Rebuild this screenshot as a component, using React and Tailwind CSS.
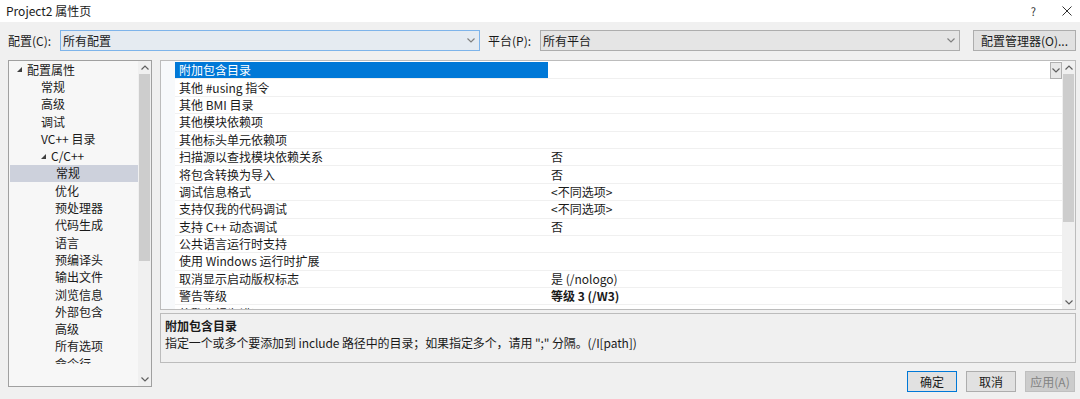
import React from "react";

const TREE = [
  { label: "配置属性", level: 0, arrow: true },
  { label: "常规", level: 1 },
  { label: "高级", level: 1 },
  { label: "调试", level: 1 },
  { label: "VC++ 目录", level: 1 },
  { label: "C/C++", level: 1, arrow: true },
  { label: "常规", level: 2, selected: true },
  { label: "优化", level: 2 },
  { label: "预处理器", level: 2 },
  { label: "代码生成", level: 2 },
  { label: "语言", level: 2 },
  { label: "预编译头", level: 2 },
  { label: "输出文件", level: 2 },
  { label: "浏览信息", level: 2 },
  { label: "外部包含", level: 2 },
  { label: "高级", level: 2 },
  { label: "所有选项", level: 2 },
  { label: "命令行", level: 2 },
];

const PROPS = [
  { name: "附加包含目录", value: "", selected: true },
  { name: "其他 #using 指令", value: "" },
  { name: "其他 BMI 目录", value: "" },
  { name: "其他模块依赖项", value: "" },
  { name: "其他标头单元依赖项", value: "" },
  { name: "扫描源以查找模块依赖关系", value: "否" },
  { name: "将包含转换为导入", value: "否" },
  { name: "调试信息格式", value: "<不同选项>" },
  { name: "支持仅我的代码调试", value: "<不同选项>" },
  { name: "支持 C++ 动态调试", value: "否" },
  { name: "公共语言运行时支持", value: "" },
  { name: "使用 Windows 运行时扩展", value: "" },
  { name: "取消显示启动版权标志", value: "是 (/nologo)" },
  { name: "警告等级", value: "等级 3 (/W3)", bold: true },
  { name: "将警告视为错误", value: "否 (/WX-)" },
];

const INDENT = ["pl-[8px]", "pl-[32px]", "pl-[46px]"];

function Chevron({ up, className = "" }) {
  return (
    <svg width="8" height="5" viewBox="0 0 8 5" className={className}>
      <polyline
        points={up ? "0.5,4.5 4,1 7.5,4.5" : "0.5,0.5 4,4 7.5,0.5"}
        fill="none"
        stroke="currentColor"
        strokeWidth="1.2"
      />
    </svg>
  );
}

function Tri() {
  return (
    <svg width="5" height="5" viewBox="0 0 5 5" className="mr-[5px] text-[#404040]">
      <polygon points="5,0 5,5 0,5" fill="currentColor" />
    </svg>
  );
}

function Scrollbar({ thumbHeight }) {
  return (
    <div className="flex w-[13px] shrink-0 flex-col bg-[#f0f0f0]">
      <div className="flex h-[13px] items-center justify-center text-[#606060]">
        <Chevron up />
      </div>
      <div className="flex-1">
        <div className="mx-[1px] bg-[#cdcdcd]" style={{ height: thumbHeight }} />
      </div>
      <div className="flex h-[13px] items-center justify-center text-[#606060]">
        <Chevron />
      </div>
    </div>
  );
}

export default function App() {
  return (
    <div className="flex h-[399px] w-[1080px] flex-col overflow-hidden bg-[#f0f0f0] font-['Noto_Sans_CJK_SC',sans-serif] text-[12px] text-[#1a1a1a]">
      {/* title bar */}
      <div className="flex h-[22px] shrink-0 items-center bg-white pl-[6px]">
        <span className="leading-none">Project2 属性页</span>
        <span className="ml-auto mr-[26px] text-[11px] text-[#333]">?</span>
        <svg width="10" height="10" viewBox="0 0 10 10" className="mr-[8px] text-[#333]">
          <path d="M0.5 0.5 L9.5 9.5 M9.5 0.5 L0.5 9.5" stroke="currentColor" strokeWidth="1" />
        </svg>
      </div>

      {/* config row */}
      <div className="mt-[8px] flex h-[21px] shrink-0 items-center pl-[8px]">
        <span className="w-[52px]">配置(C):</span>
        <div className="flex h-[21px] w-[420px] items-center border border-[#7eb4ea] bg-[#e5ebf1] pl-[2px] pr-[4px]">
          <span>所有配置</span>
          <Chevron className="ml-auto text-[#808080]" />
        </div>
        <span className="ml-[8px] w-[52px]">平台(P):</span>
        <div className="flex h-[21px] w-[420px] items-center border border-[#adadad] bg-[#e5e5e5] pl-[2px] pr-[4px]">
          <span>所有平台</span>
          <Chevron className="ml-auto text-[#808080]" />
        </div>
        <div className="ml-[13px] flex h-[21px] w-[103px] items-center justify-center border border-[#adadad] bg-[#e1e1e1]">
          配置管理器(O)...
        </div>
      </div>

      {/* main */}
      <div className="mt-[9px] flex pl-[8px]">
        {/* tree */}
        <div className="flex h-[327px] w-[144px] shrink-0 border border-[#a0a0a0] bg-[#f7f7f7]">
          <div className="mb-[22px] flex-1 overflow-hidden">
            {TREE.map((t, i) => (
              <div
                key={i}
                className={`flex h-[17.3px] items-center leading-none ${INDENT[t.level]} ${
                  t.selected ? "ml-[1px] bg-[#cdd1dc]" : ""
                }`}
              >
                {t.arrow ? <Tri /> : null}
                <span>{t.label}</span>
              </div>
            ))}
          </div>
          <Scrollbar thumbHeight={187} />
        </div>

        {/* right column */}
        <div className="ml-[8px] flex w-[916px] flex-col">
          {/* grid */}
          <div className="flex h-[250px] border border-[#bcbcbc] bg-white">
            <div className="w-[14px] shrink-0 bg-[#f7f9fb]" />
            <div className="flex-1 overflow-hidden pt-[1px]">
              {PROPS.map((p, i) => (
                <div key={i} className="flex h-[17.4px] border-b border-[#f0f0f0] leading-none">
                  <div
                    className={`flex w-[373px] shrink-0 items-center pl-[4px] ${
                      p.selected ? "bg-[#0078d7] text-white" : ""
                    }`}
                  >
                    {p.name}
                  </div>
                  <div className={`flex flex-1 items-center pl-[3px] ${p.bold ? "font-bold" : ""}`}>
                    {p.value}
                    {p.selected ? (
                      <div className="ml-auto flex h-[17px] w-[12px] items-center justify-center border border-[#b0b0b0] bg-[#e8e8e8] text-[#606060]">
                        <Chevron />
                      </div>
                    ) : null}
                  </div>
                </div>
              ))}
            </div>
            <Scrollbar thumbHeight={148} />
          </div>

          {/* description */}
          <div className="mt-[3px] flex h-[50px] flex-col border border-[#bcbcbc] bg-[#f0f0f0] pl-[4px] pt-[3px] leading-[17px]">
            <span className="font-bold">附加包含目录</span>
            <span className="tracking-[-0.1px]">
              指定一个或多个要添加到 include 路径中的目录；如果指定多个，请用 ";" 分隔。(/I[path])
            </span>
          </div>

          {/* buttons */}
          <div className="mt-[8px] flex justify-end gap-[9px] pr-[1px]">
            <div className="flex h-[21px] w-[50px] items-center justify-center border border-[#0078d7] bg-[#e1e1e1]">
              确定
            </div>
            <div className="flex h-[21px] w-[50px] items-center justify-center border border-[#adadad] bg-[#e1e1e1]">
              取消
            </div>
            <div className="flex h-[21px] w-[50px] items-center justify-center border border-[#bfbfbf] bg-[#cccccc] text-[#838383]">
              应用(A)
            </div>
          </div>
        </div>
      </div>
    </div>
  );
}
